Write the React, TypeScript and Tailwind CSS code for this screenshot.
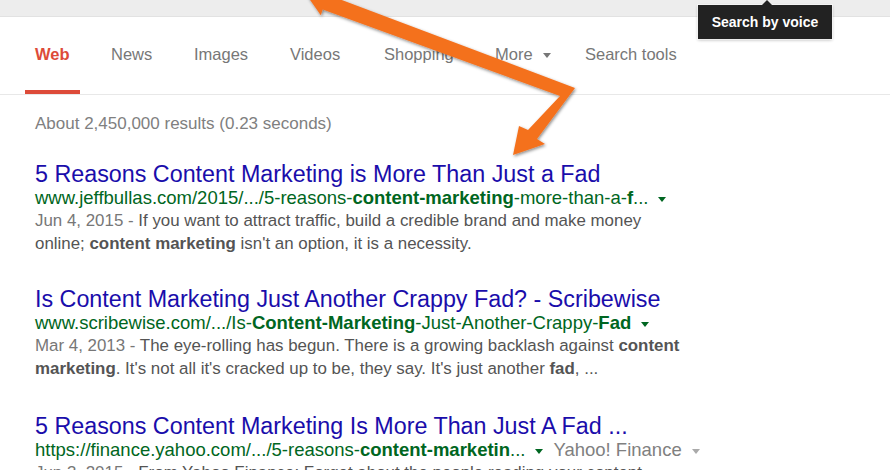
import type { ReactNode } from "react";

const tabs = [
  { label: "Web", w: "w-[76px]" },
  { label: "News", w: "w-[83px]" },
  { label: "Images", w: "w-[96px]" },
  { label: "Videos", w: "w-[94px]" },
  { label: "Shopping", w: "w-[111px]" },
  { label: "More", w: "w-[90px]" },
  { label: "Search tools", w: "" },
];

function Caret({ className }: { className: string }) {
  return (
    <span
      className={`ml-[10px] inline-block h-0 w-0 border-x-[4px] border-t-[5px] border-x-transparent align-middle ${className}`}
    />
  );
}

function Result({
  title,
  url,
  extra,
  snippet,
  className = "",
}: {
  title: string;
  url: ReactNode;
  extra?: ReactNode;
  snippet: ReactNode;
  className?: string;
}) {
  return (
    <div className={className}>
      <div className="text-[23.3px] leading-[24px] text-[#1a0dab] whitespace-nowrap">{title}</div>
      <div className="text-[18.5px] leading-[23px] text-[#006621] whitespace-nowrap">
        {url}
        <Caret className="border-t-[#006621]" />
        {extra}
      </div>
      <div className="text-[16.9px] leading-[23px] text-[#545454] whitespace-nowrap">{snippet}</div>
    </div>
  );
}

function Arrow() {
  return (
    <svg className="pointer-events-none absolute left-0 top-0" width="890" height="470" viewBox="0 0 890 470">
      <defs>
        <filter id="sh" x="-10%" y="-10%" width="120%" height="130%">
          <feDropShadow dx="1" dy="1.5" stdDeviation="1.5" floodColor="#000" floodOpacity="0.45" />
        </filter>
      </defs>
      <polygon
        filter="url(#sh)"
        fill="#f4711f"
        points="308,-3 329,-9.3 328.5,-5 575,88 537,139 545,144 513,155 519,126 528,130 560,96 322.7,9.6 320.8,15.3"
      />
    </svg>
  );
}

export default function App() {
  return (
    <div className="relative h-[470px] w-[890px] overflow-hidden bg-white font-['Liberation_Sans',Arial,sans-serif]">
      {/* top strip */}
      <div className="h-[17px] border-b border-[#e2e2e2] bg-[#ededed]" />

      {/* tabs */}
      <div className="flex h-[78px] items-end border-b border-[#e8e8e8] pl-[25px]">
        {tabs.map((t) => (
          <div key={t.label} className={t.w}>
            <span
              className={
                t.label === "Web"
                  ? "inline-block border-b-[4px] border-[#dd4b39] px-[10px] pb-[26px] text-[16.5px] leading-[20px] font-bold text-[#dd4b39]"
                  : "inline-block border-b-[4px] border-transparent px-[10px] pb-[26px] text-[16.5px] leading-[20px] text-[#777]"
              }
            >
              {t.label}
              {t.label === "More" && <Caret className="ml-[5px] border-t-[#777]" />}
            </span>
          </div>
        ))}
      </div>

      {/* results */}
      <div className="pl-[35px] pt-[17px]">
        <div className="text-[17px] leading-[23px] text-[#808080]">About 2,450,000 results (0.23 seconds)</div>

        <Result
          className="mt-[27px]"
          title="5 Reasons Content Marketing is More Than Just a Fad"
          url={
            <>
              www.jeffbullas.com/2015/.../5-reasons-<b>content-marketing</b>-more-than-a-<b>f</b>...
            </>
          }
          snippet={
            <>
              <span className="text-[#777]">Jun 4, 2015 - </span>If you want to attract traffic, build a credible brand and make money
              <br />
              online; <b>content marketing</b> isn't an option, it is a necessity.
            </>
          }
        />

        <Result
          className="mt-[32px]"
          title="Is Content Marketing Just Another Crappy Fad? - Scribewise"
          url={
            <>
              www.scribewise.com/.../Is-<b>Content-Marketing</b>-Just-Another-Crappy-<b>Fad</b>
            </>
          }
          snippet={
            <>
              <span className="text-[#777]">Mar 4, 2013 - </span>The eye-rolling has begun. There is a growing backlash against <b>content</b>
              <br />
              <b>marketing</b>. It's not all it's cracked up to be, they say. It's just another <b>fad</b>, ...
            </>
          }
        />

        <Result
          className="mt-[34px]"
          title="5 Reasons Content Marketing Is More Than Just A Fad ..."
          url={
            <>
              https://finance.yahoo.com/.../5-reasons-<b>content-marketin</b>...
            </>
          }
          extra={
            <span className="ml-[10px] text-[#808080]">
              Yahoo! Finance
              <Caret className="ml-[8px] border-t-[#aaa]" />
            </span>
          }
          snippet={
            <>
              <span className="text-[#777]">Jun 3, 2015 - </span>From Yahoo Finance: Forget about the people reading your content
            </>
          }
        />
      </div>

      {/* tooltip */}
      <div className="absolute left-[698px] top-[5px] flex h-[34px] w-[134px] items-center justify-center bg-[#222] text-[14px] font-bold text-white shadow-[0_0_0_1px_rgba(255,255,255,0.6),0_1px_3px_rgba(0,0,0,0.3)]">
        <span className="absolute -top-[5px] left-[64px] h-0 w-0 border-x-[5px] border-b-[5px] border-x-transparent border-b-[#222]" />
        Search by voice
      </div>

      <Arrow />
    </div>
  );
}
